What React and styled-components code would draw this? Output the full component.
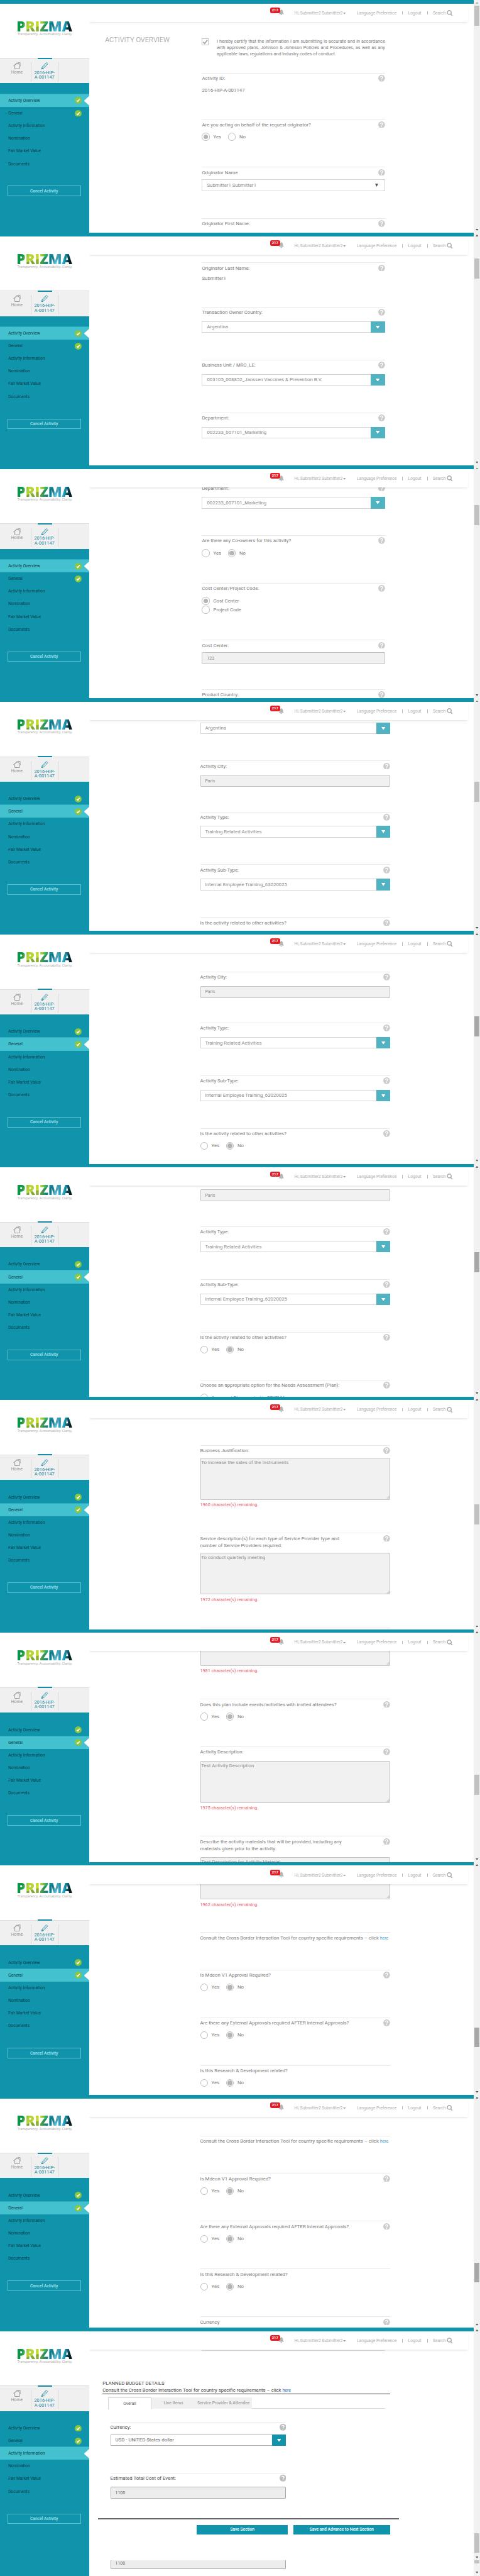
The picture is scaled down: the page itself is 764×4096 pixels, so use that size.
import React from 'react';
import styled, { createGlobalStyle, css } from 'styled-components';

/* 1rem stands for ten design pixels. */
const GlobalStyle = createGlobalStyle`
  html { font-size: 5.591px; }
  body { margin: 0; background: #fff; font-family: Roboto, "Liberation Sans", sans-serif; }
  *, *::before, *::after { box-sizing: border-box; }
`;

const r = (n) => `${n / 10}rem`;

/* ---------- page frame ---------- */

const Page = styled.div`
  width: 136.6rem;
  height: 732.6rem;
  overflow: hidden;
  font-size: 1.4rem;
  color: #7c7c7c;
`;

const Screen = styled.section`
  display: grid;
  grid-template-columns: 134.9rem 1.7rem;
  height: ${(p) => r(p.$height)};
  overflow: hidden;
`;

const Window = styled.div`
  display: grid;
  grid-template-columns: 25.4rem 1fr;
  grid-template-rows: 1rem minmax(0, 1fr);
  min-height: 0;
`;

const TopBar = styled.div`
  grid-column: 1 / -1;
  background: #0f94ac;
`;

const Main = styled.main`
  display: flex;
  flex-direction: column;
  min-height: 0;
  overflow: hidden;
  background: #fff;
`;

/* ---------- sidebar ---------- */

const Sidebar = styled.aside`
  display: flex;
  flex-direction: column;
  background: #0f94ac;
`;

const Brand = styled.div`
  height: 15.5rem;
  padding: 4.1rem 0 0 4.7rem;
  background: #fff;
`;

const Wordmark = styled.div`
  width: 16rem;
  font: 800 4.03rem/4.6rem "Open Sans", sans-serif;
  letter-spacing: -0.02rem;
  white-space: nowrap;
  color: transparent;
  background:
    linear-gradient(165deg, transparent 45%, rgba(0, 70, 80, 0.3) 46% 60%, transparent 75%),
    linear-gradient(105deg, #0a9447 0 12%, #5cb146 17%, #b5d334 22% 33%, #cfdc2a 40%, #8cc63f 45%, #3aae62 50%, #1a8f8a 56%, #148ea8 62%, #6ecbe4 70%, #1f9fc9 77%, #2bb6da 82%, #0b6070 87%, #05242c 91%, #04171c 100%);
  background-clip: text;
  -webkit-background-clip: text;
`;

const Tagline = styled.div`
  margin-top: -0.55rem;
  padding-left: 0.25rem;
  font: 400 0.915rem/1.2rem "Open Sans", sans-serif;
  white-space: nowrap;
  color: #a3a3a3;
`;

const Shortcuts = styled.nav`
  display: flex;
  height: 7.2rem;
  background: #f0f0f0;
  border-top: 1px solid #dcdcdc;
`;

const Shortcut = styled.div`
  position: relative;
  display: flex;
  flex-direction: column;
  align-items: center;
  width: ${(p) => r(p.$width)};
  margin: 1.1rem 0 0.5rem;
  padding-left: ${(p) => r(p.$indent || 0)};
  border-right: 1px solid #d6d6d6;
  color: ${(p) => (p.$current ? '#1c8ba4' : '#929292')};
  font-size: ${(p) => (p.$current ? '1.33rem' : '1.23rem')};
  line-height: 1.3rem;
  text-align: center;
  white-space: pre;
  svg { flex: none; width: 2.2rem; height: 2rem; margin: 0 0 0.3rem; }
`;

const CurrentMark = styled.span`
  position: absolute;
  top: -1.4rem;
  left: 1.75rem;
  width: 4.2rem;
  height: 0.35rem;
  background: #158da5;
`;

const Menu = styled.ul`
  margin: 3.1rem 0 0;
  padding: 0;
  list-style: none;
`;

const MenuItem = styled.li`
  position: relative;
  display: flex;
  align-items: center;
  justify-content: space-between;
  height: 3.6rem;
  padding: 0 2.2rem 0 2.35rem;
  font-size: 1.2rem;
  color: #0d3d49;
  svg { width: 1.95rem; height: 1.95rem; }
  ${(p) => p.$active && css`
    background: #43c1cf;
    box-shadow: 0 -0.1rem #43c1cf;
    &::after {
      content: "";
      position: absolute;
      right: 0;
      top: 0.5rem;
      width: 1.5rem;
      height: 2.7rem;
      background: #fff;
      clip-path: polygon(100% 0, 0 50%, 100% 100%);
    }
  `}
`;

const CancelButton = styled.button`
  width: 20.9rem;
  height: 3rem;
  margin: 4.45rem 0 0 2.1rem;
  padding: 0;
  border: 1px solid #5fc3d3;
  background: none;
  color: #a5e4ec;
  font: 500 1.187rem Roboto, sans-serif;
`;

/* ---------- header ---------- */

const Header = styled.header`
  position: relative;
  z-index: 1;
  flex: none;
  display: grid;
  grid-template-columns: 6.9rem 17.8rem 12.95rem 1.65rem 5.35rem 1.7rem 3.95rem 2rem;
  align-items: center;
  width: 107.9rem;
  height: 5.2rem;
  padding: 0.2rem 0 0 51.5rem;
  background: #fff;
  box-shadow: 0 0.5rem 0.6rem -0.2rem rgba(0, 0, 0, 0.13);
  color: #adadad;
  font-size: 1.2rem;
  white-space: nowrap;
  svg { display: block; }
`;

const Alerts = styled.div`
  position: relative;
  height: 2.6rem;
  svg { position: absolute; left: 2.4rem; top: 0.35rem; width: 1.7rem; height: 1.7rem; }
`;

const AlertCount = styled.span`
  position: absolute;
  z-index: 1;
  left: 0;
  top: -0.25rem;
  width: 2.8rem;
  height: 1.6rem;
  border-radius: 0.5rem;
  background: #e21e27;
  color: #fff;
  font: 700 1.05rem/1.65rem Roboto, sans-serif;
  text-align: center;
`;

const UserMenu = styled.div`
  display: flex;
  align-items: center;
  gap: 0.15rem;
  svg { width: 0.8rem; height: 0.5rem; margin-top: 0.2rem; }
`;

const Divider = styled.span`
  width: 1px;
  height: 1rem;
  background: #b8b8b8;
`;

const SearchIconBox = styled.span`
  width: 1.7rem;
  height: 1.7rem;
`;

/* ---------- form ---------- */

const Viewport = styled.div`
  flex: 1;
  display: grid;
  grid-template-columns: ${(p) => (p.$wide ? '31.57rem 54.1rem' : '32.1rem 52.1rem')};
  align-items: start;
  min-height: 0;
  overflow: hidden;
`;

const SectionTitle = styled.h1`
  margin: 4.25rem 0 0 4.5rem;
  font-weight: 300;
  font-size: 1.99rem;
  line-height: 2.2rem;
  color: #8c8c8c;
  white-space: nowrap;
`;

const Column = styled.div`
  grid-column: 2;
  display: flex;
  flex-direction: column;
  margin-top: ${(p) => r(p.$offset)};
`;

const Certification = styled.div`
  display: flex;
  justify-content: space-between;
  height: 9.88rem;
  svg { flex: none; width: 2rem; height: 2rem; }
`;

const CertificationText = styled.p`
  width: 47.9rem;
  margin: 0.05rem 0 0;
  font-size: 1.296rem;
  line-height: 1.8rem;
`;

const JustifiedLine = styled.span`
  display: block;
  white-space: nowrap;
  text-align-last: ${(p) => (p.$last ? 'left' : 'justify')};
`;

const FieldBox = styled.div`
  flex: none;
  height: ${(p) => r(p.$height)};
  border-top: 1px solid ${(p) => (p.$bare ? 'transparent' : '#e9e9e9')};
`;

const LabelRow = styled.div`
  display: flex;
  align-items: flex-start;
  justify-content: space-between;
  padding-top: calc(0.6rem - 1px);
  line-height: 2rem;
  white-space: pre;
  color: ${(p) => (p.$dark ? '#4a4a4a' : 'inherit')};
  svg { flex: none; width: 1.92rem; height: 1.92rem; }
`;

const FieldBody = styled.div`
  margin-top: ${(p) => r(p.$gap)};
`;

const Value = styled.div`
  line-height: 2rem;
`;

const ControlBox = styled.div`
  display: flex;
  align-items: center;
  justify-content: space-between;
  height: 3.33rem;
  padding-left: 1.25rem;
  border: 1px solid ${(p) => (p.$dark ? '#b5b5b5' : '#d4d4d4')};
  background: #fff;
  color: ${(p) => (p.$dark ? '#666' : '#8a8a8a')};
  > svg { width: 0.9rem; height: 0.9rem; margin-right: 1.7rem; }
`;

const ReadOnlyBox = styled(ControlBox)`
  border-color: ${(p) => (p.$dark ? '#a8a8a8' : '#c4c4c4')};
  border-radius: 0.2rem;
  background: ${(p) => (p.$dark ? '#ededed' : '#f1f1f1')};
  font-size: 1.25rem;
`;

const DropButton = styled.span`
  display: flex;
  align-items: center;
  justify-content: center;
  width: 4rem;
  height: 3.33rem;
  margin-right: -1px;
  background: ${(p) => (p.$dark ? '#0f94ac' : '#51b3c2')};
  svg { width: 1.15rem; height: 0.85rem; }
`;

const TextBox = styled.div`
  display: flex;
  flex-direction: column;
  justify-content: space-between;
  height: 11.9rem;
  padding: 0.2rem 0 0.1rem 0.15rem;
  border: 1px solid #c4c4c4;
  border-radius: 0.2rem;
  background: #f1f1f1;
  color: #8f8f8f;
  line-height: 2rem;
  svg { align-self: flex-end; width: 0.9rem; height: 0.9rem; }
`;

const Remaining = styled.div`
  margin-top: 0.5rem;
  color: #e4626d;
  font-size: 1.292rem;
  line-height: 2rem;
`;

const RadioGroup = styled.div`
  display: flex;
  flex-direction: ${(p) => (p.$stacked ? 'column' : 'row')};
  gap: ${(p) => (p.$stacked ? '0.35rem' : '0')};
  margin-top: -0.05rem;
`;

const RadioOption = styled.div`
  display: flex;
  align-items: center;
  gap: 1.05rem;
  min-width: 7.4rem;
  height: 2.18rem;
`;

const RadioDot = styled.span`
  display: grid;
  place-items: center;
  width: 2.18rem;
  height: 2.18rem;
  border: 1px solid #bdbdbd;
  border-radius: 50%;
  &::after {
    content: "";
    width: 1.4rem;
    height: 1.4rem;
    border-radius: 50%;
    background: ${(p) => (p.$checked ? '#b4b4b4' : 'transparent')};
  }
`;

const Link = styled.a`
  color: ${(p) => (p.$strong ? '#1a6fb5' : '#3d9cd0')};
  font-size: 1.25rem;
`;

/* ---------- budget section ---------- */

const Budget = styled.div`
  flex: 1;
  display: flex;
  flex-direction: column;
  min-height: 0;
  color: #454545;
`;

const FieldEnd = styled.div`
  flex: none;
  width: 52.1rem;
  height: 8.35rem;
  margin: 0.2rem 0 0 32.1rem;
  border-top: 1px solid #ddd;
`;

const BudgetHeading = styled.div`
  flex: none;
  width: 81.9rem;
  height: 4.15rem;
  margin-left: 3.8rem;
  border-bottom: 1px solid #333;
  line-height: 2rem;
  white-space: pre;
`;

const Tabs = styled.div`
  flex: none;
  display: flex;
  width: 78.9rem;
  height: 3.25rem;
  margin: 1rem 0 0 5.3rem;
  border-bottom: 1px solid #d4d4d4;
`;

const Tab = styled.div`
  display: flex;
  align-items: center;
  justify-content: center;
  width: ${(p) => r(p.$width)};
  height: 3.2rem;
  background: #f0f0f0;
  color: #a0a0a0;
  font-weight: 500;
  font-size: 1.2rem;
  ${(p) => p.$selected && css`
    height: 3.35rem;
    border: 1px solid #d8d8d8;
    border-bottom: 0;
    background: #fff;
    color: #555;
    font-weight: 400;
  `}
`;

const BudgetFields = styled.div`
  flex: none;
  width: 50.05rem;
  height: 27.45rem;
  margin: 3.6rem 0 0 6rem;
`;

const Actions = styled.div`
  flex: none;
  display: flex;
  gap: 1.45rem;
  width: 85.7rem;
  height: 12rem;
  margin-left: 2.5rem;
  padding: 1.6rem 0 0 28.1rem;
  border-top: 0.5rem solid #666;
`;

const ActionButton = styled.button`
  width: ${(p) => r(p.$width)};
  height: 2.65rem;
  padding: 0;
  border: 0;
  background: #0f94ac;
  color: #fff;
  font: 500 1.2rem Roboto, sans-serif;
`;

const Remnant = styled.div`
  flex: none;
  width: 50.05rem;
  height: 2.5rem;
  margin-left: 6rem;
  overflow: hidden;
  display: flex;
  flex-direction: column;
  justify-content: flex-end;
  > div { flex: none; }
`;

/* ---------- scroll bar ---------- */

const ScrollTrack = styled.div`
  display: flex;
  flex-direction: column;
  align-items: center;
  background: #f1f1f1;
  > svg { flex: none; width: 0.8rem; height: 0.5rem; margin: 0.6rem 0; }
`;

const ScrollLane = styled.div`
  flex: none;
  width: 1.3rem;
  height: 62.8rem;
`;

const Thumb = styled.div`
  height: 5.7rem;
  margin-top: ${(p) => r(p.$top - 17)};
  background: ${(p) => (p.$pressed ? '#a8a8a8' : '#c1c1c1')};
`;

const ThumbStub = styled.div`
  flex: none;
  width: 1.3rem;
  height: 0.9rem;
  margin: 0 0 1.7rem;
  background: #c1c1c1;
`;

/* ---------- icons ---------- */

const Caret = ({ up, fill = '#4d4d4d' }) => (
  <svg viewBox="0 0 10 8" preserveAspectRatio="none"><path d={up ? 'M0 8L5 0L10 8Z' : 'M0 0H10L5 8Z'} fill={fill} /></svg>
);

const HomeIcon = () => (
  <svg viewBox="0 0 22 20" fill="none" stroke="#969696">
    <path d="M1 11L11 1.8L14.6 5" strokeWidth="2" />
    <path d="M14.8 4.6V1.2H19.6V9.4L21 11" strokeWidth="1.8" />
    <path d="M15.2 5.2L20.4 10" strokeWidth="1.4" />
    <path d="M4.6 10.2V18.8H9M13.4 18.8H17.8V10.2M8 18.8H14.4" strokeWidth="1.7" />
  </svg>
);

const PencilIcon = () => (
  <svg viewBox="0 0 22 20" fill="none" stroke="#1c8ba4" strokeWidth="1.4" strokeLinejoin="round">
    <path d="M2.5 19L4 13.2L14.6 2C15.4 1.1 16.4 1.1 17.3 1.9L19 3.5C19.8 4.3 19.8 5.2 19 6L8.4 17L2.5 19Z" />
    <path d="M13 3.8L17.2 7.8M6.8 13.8L14 6.6M4 13.2L8.4 17" strokeWidth="1.2" />
    <path d="M2.3 19.2L3.2 16L5.4 18.2Z" fill="#1c8ba4" />
  </svg>
);

const BellIcon = () => (
  <svg viewBox="0 0 17 17" fill="#b5b5b5">
    <path d="M8.5 0C9.3 0 9.8.6 9.8 1.3C12 1.9 13.2 3.8 13.2 6.2C13.2 10.2 14.4 11.2 16.2 13.2H.8C2.6 11.2 3.8 10.2 3.8 6.2C3.8 3.8 5 1.9 7.2 1.3C7.2.6 7.7 0 8.5 0Z" />
    <path d="M6.2 14.4H10.8C10.5 15.8 9.6 16.6 8.5 16.6S6.5 15.8 6.2 14.4Z" />
  </svg>
);

const SearchIcon = () => (
  <svg viewBox="0 0 17 17" fill="none" stroke="#a6a6a6" strokeWidth="2.4">
    <circle cx="7.4" cy="7" r="5.6" /><path d="M11.2 11.2L16 16.2" strokeWidth="2.8" />
  </svg>
);

const HelpIcon = ({ dark }) => (
  <svg viewBox="0 0 19 19">
    <circle cx="9.5" cy="9.5" r="9.5" fill={dark ? '#bdbdbd' : '#cdcdcd'} />
    <path d="M6.4 7.2C6.4 5.2 7.7 4.1 9.5 4.1C11.4 4.1 12.6 5.3 12.6 6.9C12.6 9.2 9.6 9.2 9.6 11.6" fill="none" stroke="#fff" strokeWidth="2.3" />
    <circle cx="9.6" cy="14.4" r="1.4" fill="#fff" />
  </svg>
);

const DoneIcon = () => (
  <svg viewBox="0 0 20 20">
    <circle cx="10" cy="10" r="10" fill="#8cc63f" />
    <path d="M5.8 10.4L8.8 13.4L14.2 6.8" fill="none" stroke="#fff" strokeWidth="2.8" />
  </svg>
);

const CheckedBox = () => (
  <svg viewBox="0 0 20 20">
    <rect x="0.9" y="0.9" width="18.2" height="18.2" fill="#fff" stroke="#b9b9b9" strokeWidth="1.6" />
    <path d="M4 10L8.6 14.8L16 4.8" fill="none" stroke="#adadad" strokeWidth="3.4" />
  </svg>
);

const Grip = () => (
  <svg viewBox="0 0 9 9" stroke="#8c8c8c" strokeWidth="1"><path d="M1 9L9 1M5 9L9 5" /></svg>
);

/* ---------- composed parts ---------- */

const MENU = ['Activity Overview', 'General', 'Activity Information', 'Nomination', 'Fair Market Value', 'Documents'];

const SideNav = ({ active }) => (
  <Sidebar>
    <Brand>
      <Wordmark>PRIZMA</Wordmark>
      <Tagline>Transparency. Accountability. Clarity.</Tagline>
    </Brand>
    <Shortcuts>
      <Shortcut $width={89} $indent={9}><HomeIcon />Home</Shortcut>
      <Shortcut $width={77} $current><CurrentMark /><PencilIcon />{'2016-HIP-\nA-001147'}</Shortcut>
    </Shortcuts>
    <Menu>
      {MENU.map((name, i) => (
        <MenuItem key={name} $active={i === active}>{name}{i < 2 && <DoneIcon />}</MenuItem>
      ))}
    </Menu>
    <CancelButton>Cancel Activity</CancelButton>
  </Sidebar>
);

const AppHeader = () => (
  <Header>
    <Alerts><AlertCount>217</AlertCount><BellIcon /></Alerts>
    <UserMenu>Hi, Submitter2 Submitter2<Caret fill="#a6a6a6" /></UserMenu>
    <span>Language Preference</span>
    <Divider />
    <span>Logout</span>
    <Divider />
    <span>Search</span>
    <SearchIconBox><SearchIcon /></SearchIconBox>
  </Header>
);

const Field = ({ h, label, gap = 10, help = true, dark, bare, children }) => (
  <FieldBox $height={h} $bare={bare}>
    <LabelRow $dark={dark}><span>{label || ' '}</span>{help && <HelpIcon dark={dark} />}</LabelRow>
    <FieldBody $gap={gap}>{children}</FieldBody>
  </FieldBox>
);

const Select = ({ dark, children }) => (
  <ControlBox $dark={dark}>{children}<DropButton $dark={dark}><Caret fill="#fff" /></DropButton></ControlBox>
);

const NativeSelect = ({ children }) => <ControlBox>{children}<Caret fill="#555" /></ControlBox>;

const YesNo = ({ value }) => (
  <RadioGroup>
    {['Yes', 'No'].map((o) => <RadioOption key={o}><RadioDot $checked={o === value} />{o}</RadioOption>)}
  </RadioGroup>
);

const LongText = ({ left, children }) => (
  <>
    <TextBox><span>{children}</span><Grip /></TextBox>
    <Remaining>{left} character(s) remaining.</Remaining>
  </>
);

const Consult = ({ strong }) => (
  <>Consult the Cross Border Interaction Tool for country specific requirements – click <Link $strong={strong}>here</Link></>
);

const Shot = ({ active, thumb, pressed, first, last, children }) => (
  <Screen $height={last ? 706 : 662}>
    <Window>
      <TopBar />
      <SideNav active={active} />
      <Main><AppHeader />{children}</Main>
    </Window>
    <ScrollTrack>
      <Caret up fill={first ? '#a8a8a8' : '#505050'} />
      <ScrollLane><Thumb $top={thumb} $pressed={pressed} /></ScrollLane>
      <Caret />
      {last && <><ThumbStub /><Caret /></>}
    </ScrollTrack>
  </Screen>
);

const Form = ({ start, wide, title, children }) => (
  <Viewport $wide={wide}>
    {title && <SectionTitle>{title}</SectionTitle>}
    <Column $offset={start - 62}>{children}</Column>
  </Viewport>
);

const CityField = ({ h }) => <Field h={h} label="Activity City:" gap={15.3}><ReadOnlyBox>Paris</ReadOnlyBox></Field>;
const TypeField = () => <Field h={150} label="Activity Type:" gap={15}><Select>Training Related Activities</Select></Field>;
const SubTypeField = () => <Field h={150} label="Activity Sub-Type:" gap={15}><Select>Internal Employee Training_63020025</Select></Field>;
const RelatedField = () => <Field h={135.9} label="Is the activity related to other activities?" gap={14.3}><YesNo value="No" /></Field>;
const DepartmentField = () => <Field h={150} label="Department:" gap={15}><Select>002233_007101_Marketing</Select></Field>;

const ApprovalFields = () => (
  <>
    <Field h={106.1} label={<Consult />} help={false} />
    <Field h={136} label="Is Mdeon V1 Approval Required?" gap={14.3}><YesNo value="No" /></Field>
    <Field h={135.9} label="Are there any External Approvals required AFTER Internal Approvals?" gap={14.3}><YesNo value="No" /></Field>
    <Field h={135.9} label="Is this Research & Development related?" gap={14.3} help={false}><YesNo value="No" /></Field>
  </>
);

export default function App() {
  return (
    <>
      <GlobalStyle />
      <Page>
        <Shot active={0} thumb={17} first>
          <Form start={108.5} title="ACTIVITY OVERVIEW">
            <Certification>
              <CheckedBox />
              <CertificationText>
                <JustifiedLine>I hereby certify that the information I am submitting is accurate and in accordance</JustifiedLine>
                <JustifiedLine>with approved plans, Johnson &amp; Johnson Policies and Procedures, as well as any</JustifiedLine>
                <JustifiedLine $last>applicable laws, regulations and industry codes of conduct.</JustifiedLine>
              </CertificationText>
            </Certification>
            <Field h={131.2} label="Activity ID:" gap={14.5}><Value>2016-HIP-A-001147</Value></Field>
            <Field h={135.9} label="Are you acting on behalf of the request originator?" gap={14.3}><YesNo value="Yes" /></Field>
            <Field h={146.1} label="Originator Name"><NativeSelect>Submitter1 Submitter1</NativeSelect></Field>
            <Field h={126} label="Originator First Name:"><Value>Submitter1</Value></Field>
          </Form>
        </Shot>

        <Shot active={0} thumb={73}>
          <Form start={84.3}>
            <Field h={126.1} label="Originator Last Name:"><Value>Submitter1</Value></Field>
            <Field h={150.4} label="Transaction Owner Country:" gap={15}><Select>Argentina</Select></Field>
            <Field h={150} label="Business Unit / MRC_LE:" gap={15}><Select>003105_008852_Janssen Vaccines &amp; Prevention B.V.</Select></Field>
            <DepartmentField />
            <Field h={136} />
          </Form>
        </Shot>

        <Shot active={0} thumb={113}>
          <Form start={48.4}>
            <DepartmentField />
            <Field h={135.9} label="Are there any Co-owners for this activity?" gap={14.3}><YesNo value="No" /></Field>
            <Field h={161.1} label="Cost Center/Project Code:" gap={14.3}>
              <RadioGroup $stacked>
                <RadioOption><RadioDot $checked />Cost Center</RadioOption>
                <RadioOption><RadioDot />Project Code</RadioOption>
              </RadioGroup>
            </Field>
            <Field h={140.2} label="Cost Center:"><ReadOnlyBox>123</ReadOnlyBox></Field>
            <Field h={60} label="Product Country:" />
          </Form>
        </Shot>

        <Shot active={1} thumb={238}>
          <Form wide start={27.5}>
            <Field h={149.6} gap={15} bare help={false}><Select>Argentina</Select></Field>
            <CityField h={145.3} />
            <TypeField />
            <SubTypeField />
            <RelatedField />
          </Form>
        </Shot>

        <Shot active={1} thumb={243} pressed>
          <Form wide start={115.2}>
            <CityField h={144.9} />
            <TypeField />
            <SubTypeField />
            <RelatedField />
          </Form>
        </Shot>

        <Shot active={1} thumb={251} pressed>
          <Form wide start={31.8}>
            <CityField h={145.8} />
            <TypeField />
            <SubTypeField />
            <RelatedField />
            <Field h={136} label="Choose an appropriate option for the Needs Assessment (Plan):" gap={14.3}>
              <RadioOption><RadioDot />Approved Plan created in PRIZMA</RadioOption>
            </Field>
          </Form>
        </Shot>

        <Shot active={1} thumb={307}>
          <Form wide start={138.5}>
            <Field h={249.1} label="Business Justification:"><LongText left={1960}>To increase the sales of the instruments</LongText></Field>
            <Field h={268.8} label={'Service description(s) for each type of Service Provider type and\nnumber of Service Providers required:'}>
              <LongText left={1972}>To conduct quarterly meeting</LongText>
            </Field>
            <Field h={60} help={false} />
          </Form>
        </Shot>

        <Shot active={1} thumb={414}>
          <Form wide start={-56.3}>
            <Field h={253.8} gap={15} help={false}><LongText left={1981} /></Field>
            <Field h={135.9} label="Does this plan include events/activities with invited attendees?" gap={14.3}><YesNo value="No" /></Field>
            <Field h={254.2} label="Activity Description:" gap={15}><LongText left={1975}>Test Activity Description</LongText></Field>
            <Field h={270} label={'Describe the activity materials that will be provided, including any\nmaterials given prior to the activity:'} gap={14.7}>
              <LongText left={1962}>Test Description for Activity Material</LongText>
            </Field>
          </Form>
        </Shot>

        <Shot active={1} thumb={470} pressed>
          <Form wide start={-74}>
            <Field h={273.3} label={' \n '} gap={14.7} help={false}><LongText left={1962} /></Field>
            <ApprovalFields />
          </Form>
        </Shot>

        <Shot active={1} thumb={477} pressed>
          <Form wide start={116.3}>
            <ApprovalFields />
            <Field h={60} label="Currency" />
          </Form>
        </Shot>

        <Shot active={2} thumb={584} last>
          <Budget>
            <FieldEnd />
            <BudgetHeading>{'PLANNED BUDGET DETAILS\n'}<Consult strong /></BudgetHeading>
            <Tabs>
              <Tab $width={124.5} $selected>Overall</Tab>
              <Tab $width={124.5}>Line Items</Tab>
              <Tab $width={160.5}>Service Provider &amp; Attendee</Tab>
            </Tabs>
            <BudgetFields>
              <Field h={144.9} label="Currency:" dark><Select dark>USD - UNITED States dollar</Select></Field>
              <Field h={129} label="Estimated Total Cost of Event:" gap={15} dark><ReadOnlyBox $dark>1100</ReadOnlyBox></Field>
            </BudgetFields>
            <Actions>
              <ActionButton $width={260}>Save Section</ActionButton>
              <ActionButton $width={276.2}>Save and Advance to Next Section</ActionButton>
            </Actions>
            <Remnant><ReadOnlyBox $dark>1100</ReadOnlyBox></Remnant>
          </Budget>
        </Shot>
      </Page>
    </>
  );
}
